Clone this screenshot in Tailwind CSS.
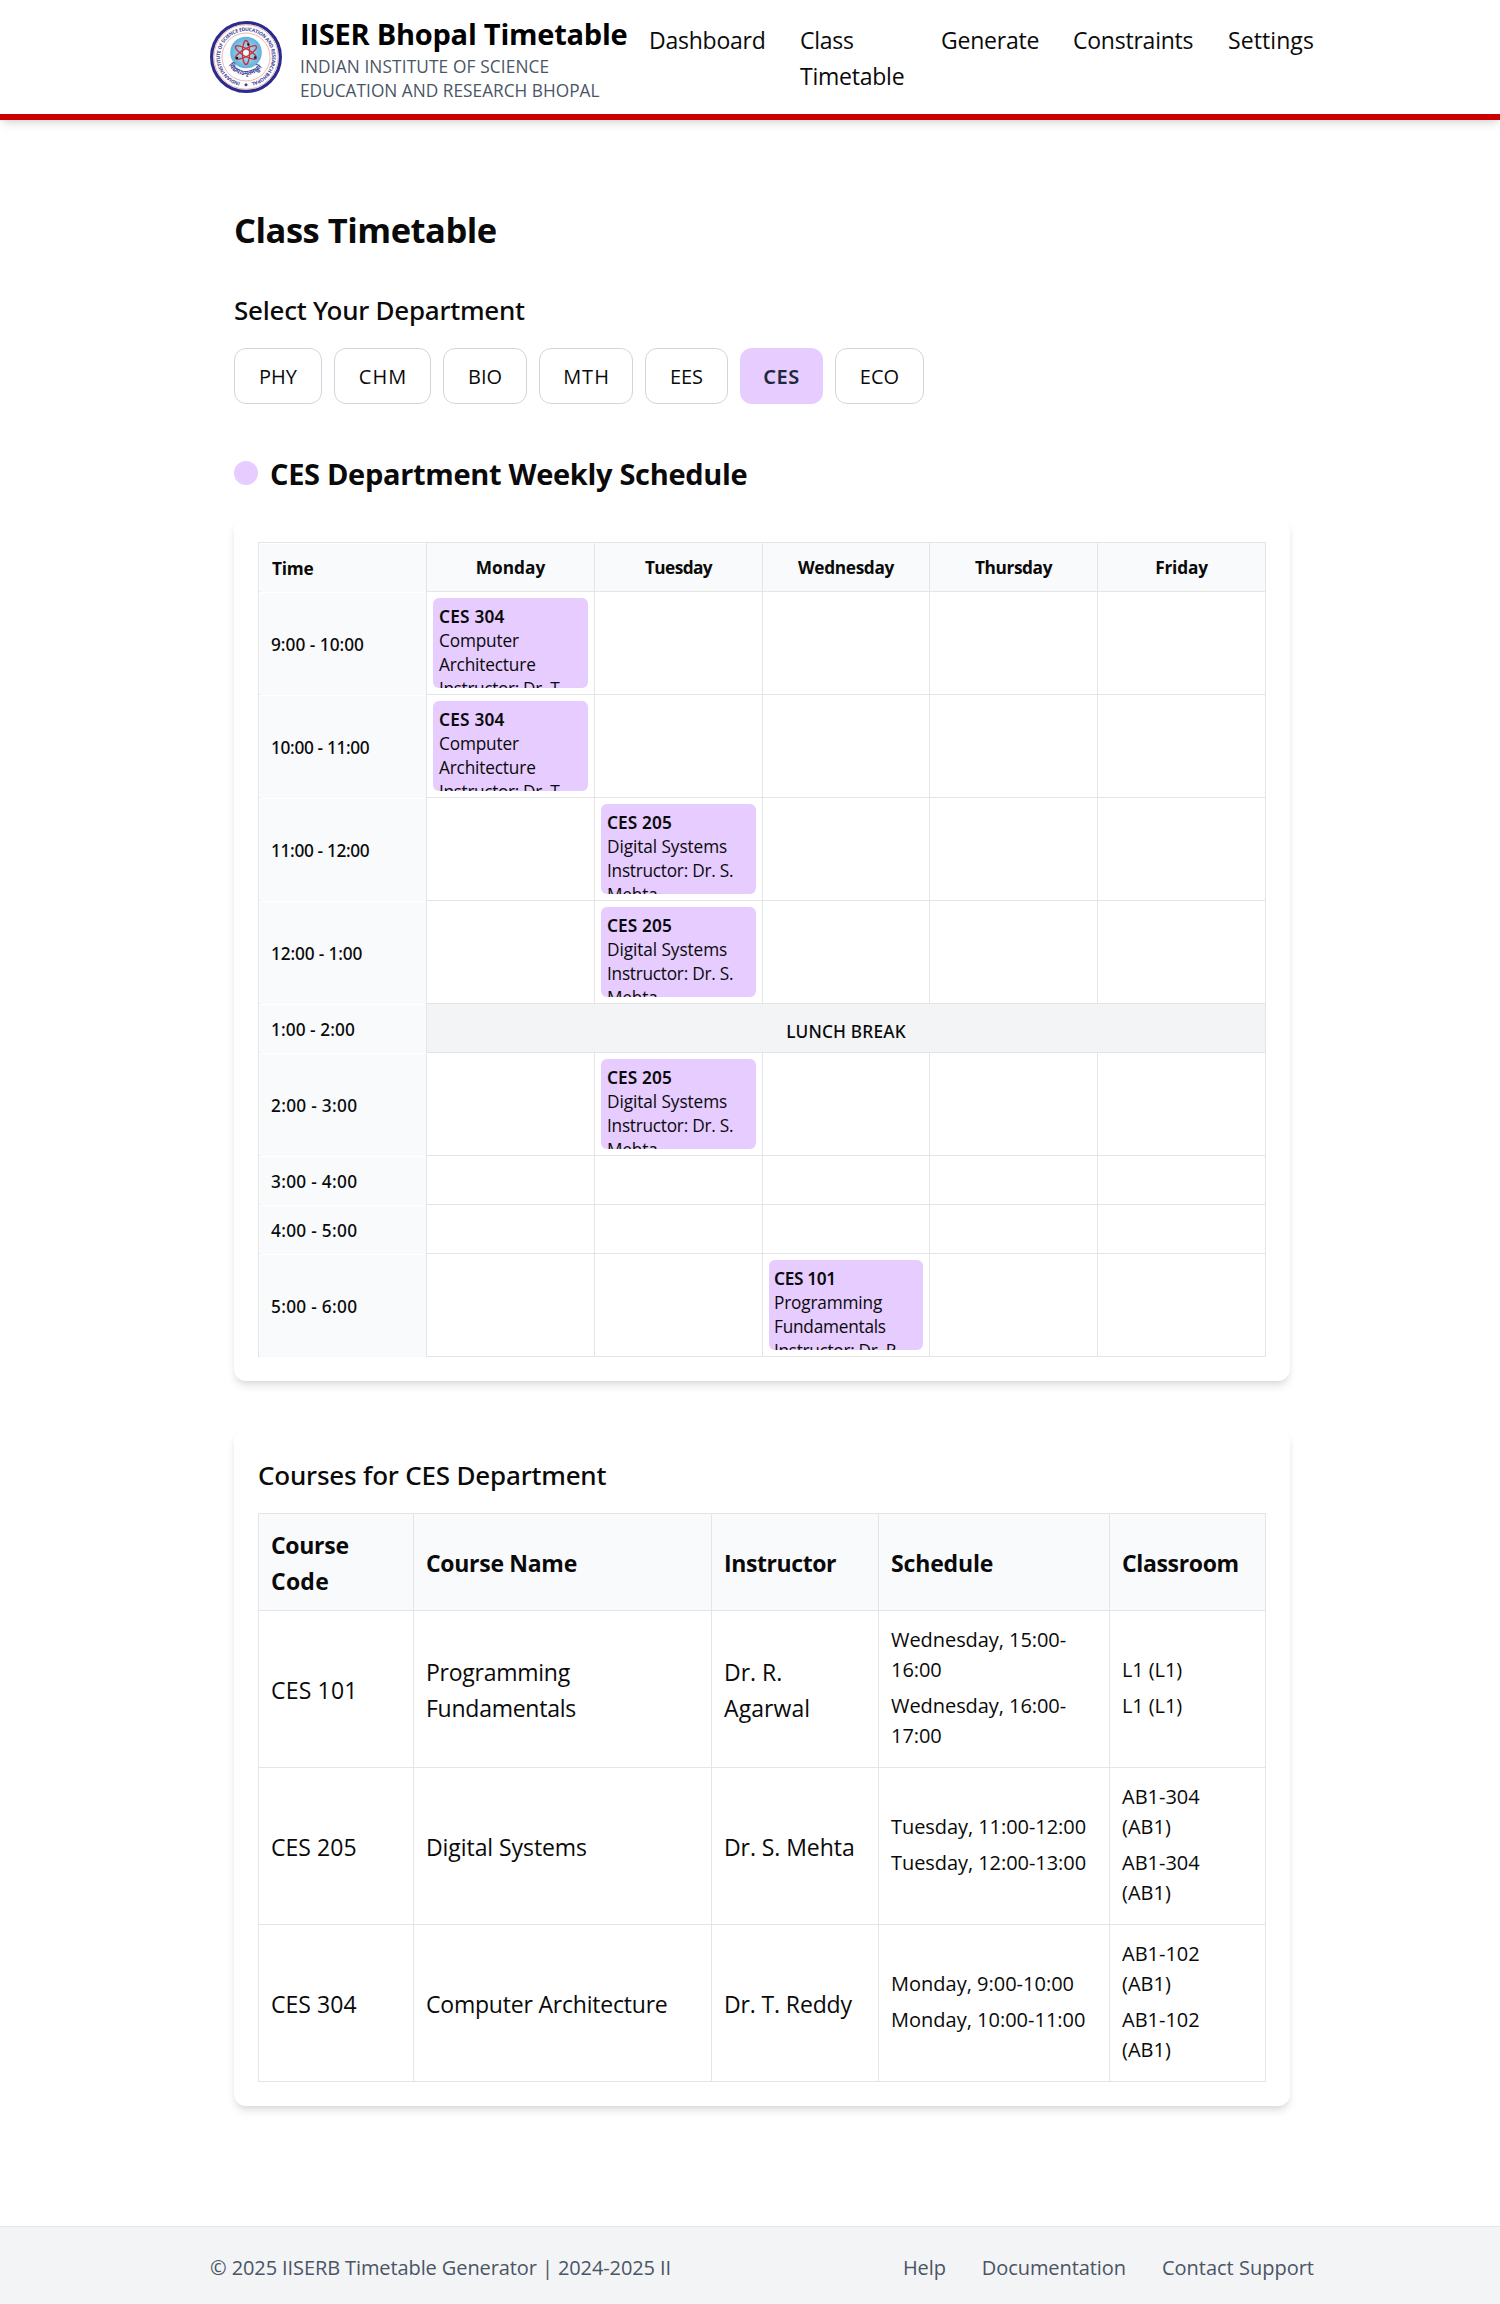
<!DOCTYPE html>
<html lang="en">
<head>
<meta charset="utf-8">
<title>IISER Bhopal Timetable</title>
<script src="https://cdn.jsdelivr.net/npm/@tailwindcss/browser@4"></script>
</head>
<body class="bg-white font-['Open_Sans','Noto_Sans',sans-serif] text-neutral-950">

<header class="h-[120px] border-b-[6px] border-[#cc0000] bg-white shadow-[0_6px_9px_-1.5px_rgba(0,0,0,0.1),0_3px_6px_-3px_rgba(0,0,0,0.1)]">
  <div class="ml-[210px] flex h-[114px] w-[1104px]">
    <svg class="mt-[21px] size-[72px] shrink-0" viewBox="0 0 72 72">
      <defs>
        <path id="ring" d="M36 62 A26 26 0 0 1 36 10 A26 26 0 0 1 36 62"/>
        <path id="motto" d="M17.5 41 A19.5 19.5 0 0 0 54.5 41"/>
        <radialGradient id="sky"><stop offset="0" stop-color="#c4e6f8"/><stop offset="1" stop-color="#5fb1dd"/></radialGradient>
      </defs>
      <circle cx="36" cy="36" r="34.4" fill="#fff" stroke="#2b2d8e" stroke-width="3.2"/>
      <circle cx="36" cy="36" r="32.2" fill="none" stroke="#e9a8a4" stroke-width="0.9"/>
      <circle cx="36" cy="36" r="24" fill="none" stroke="#efb7b3" stroke-width="1"/>
      <text class="font-bold" font-size="5" fill="#3d3f96"><textPath href="#ring" startOffset="6" textLength="151" lengthAdjust="spacing">INDIAN INSTITUTE OF SCIENCE EDUCATION AND RESEARCH BHOPAL</textPath></text>
      <circle cx="36" cy="63.7" r="1.5" fill="#3d3f96"/>
      <circle cx="36" cy="31.5" r="15.8" fill="url(#sky)"/>
      <g fill="none" stroke="#c8323a" stroke-width="1.3">
        <ellipse cx="36" cy="31.5" rx="3.6" ry="12"/>
        <ellipse cx="36" cy="31.5" rx="3.6" ry="12" transform="rotate(60 36 31.5)"/>
        <ellipse cx="36" cy="31.5" rx="3.6" ry="12" transform="rotate(-60 36 31.5)"/>
      </g>
      <circle cx="36" cy="32" r="2.8" fill="#f3f8fc"/>
      <g fill="#1c1c28"><circle cx="38.3" cy="23.5" r="1.2"/><circle cx="27" cy="37" r="1.2"/><circle cx="45" cy="36.5" r="1.2"/></g>
      <text class="font-bold" font-size="7" fill="#3d3f96"><textPath href="#motto" startOffset="3" textLength="40" lengthAdjust="spacingAndGlyphs">विद्ययाऽमृतमश्नुते</textPath></text>
    </svg>
    <div class="ml-[18px] w-[350px] pt-[13px] whitespace-nowrap">
      <p class="text-[29px] leading-[42px] font-bold tracking-[-0.008em] text-black">IISER Bhopal Timetable</p>
      <p class="text-[17.25px] leading-6 tracking-[0.0075em] text-gray-600">INDIAN INSTITUTE OF SCIENCE</p>
      <p class="text-[17.25px] leading-6 tracking-[0.001em] text-gray-600">EDUCATION AND RESEARCH BHOPAL</p>
    </div>
    <nav class="flex pt-[22px] text-[23px] leading-9 tracking-[-0.01em] whitespace-nowrap">
      <a class="w-[151px]">Dashboard</a>
      <a class="w-[141px]">Class<br>Timetable</a>
      <a class="w-[132px]">Generate</a>
      <a class="w-[155px]">Constraints</a>
      <a class="tracking-[0.004em]">Settings</a>
    </nav>
  </div>
</header>

<main class="ml-[234px] w-[1056px] pt-[86px]">
  <h1 class="text-[34.5px] leading-[48px] font-bold tracking-[-0.014em]">Class Timetable</h1>
  <h2 class="mt-[35px] font-['Noto_Sans'] text-[26px] leading-[42px] font-medium tracking-[-0.0095em]">Select Your Department</h2>

  <div class="mt-[17px] flex gap-3 text-center text-[20px]">
    <button class="h-14 w-[88px] rounded-xl border border-gray-300 pt-0.5">PHY</button>
    <button class="h-14 w-[97px] rounded-xl border border-gray-300 pt-0.5 pl-px tracking-[0.05em]">CHM</button>
    <button class="h-14 w-[84px] rounded-xl border border-gray-300 pt-0.5">BIO</button>
    <button class="h-14 w-[94px] rounded-xl border border-gray-300 pt-0.5 pl-px tracking-[0.05em]">MTH</button>
    <button class="h-14 w-[83px] rounded-xl border border-gray-300 pt-0.5">EES</button>
    <button class="h-14 w-[83px] rounded-xl bg-[#e6ccff] pt-0.5 font-['Noto_Sans'] font-semibold tracking-[0.027em] text-gray-800">CES</button>
    <button class="h-14 w-[89px] rounded-xl border border-gray-300 pt-0.5">ECO</button>
  </div>

  <div class="mt-12 flex items-center gap-3">
    <span class="size-6 rounded-full bg-[#e6ccff]"></span>
    <h2 class="h-[42px] pt-px text-[29px] leading-[42px] font-bold tracking-[-0.011em]">CES Department Weekly Schedule</h2>
  </div>

  <!-- Weekly timetable -->
  <section class="mt-6 rounded-xl bg-white p-6 shadow-[0_6px_9px_-1.5px_rgba(0,0,0,0.1),0_3px_6px_-3px_rgba(0,0,0,0.1)]">
    <div class="grid grid-cols-[168px_168px_168px_167px_168px_168px] grid-rows-[49px_103px_103px_103px_103px_49px_103px_49px_49px_103px] border-r border-b border-neutral-200 text-[17.25px] leading-6 whitespace-nowrap [&>*]:border-t [&>*]:border-l [&>*]:border-neutral-200">
      <div><div class="mt-px ml-px flex h-[47px] items-center bg-gray-50 pt-[3px] pl-3 font-bold tracking-[-0.013em]">Time</div></div>
      <div class="flex items-center justify-center bg-gray-50 pt-0.5 font-bold">Monday</div>
      <div class="flex items-center justify-center bg-gray-50 pt-0.5 font-bold tracking-[-0.035em]">Tuesday</div>
      <div class="flex items-center justify-center bg-gray-50 pt-0.5 font-bold tracking-[-0.019em]">Wednesday</div>
      <div class="flex items-center justify-center bg-gray-50 pt-0.5 font-bold tracking-[-0.022em]">Thursday</div>
      <div class="flex items-center justify-center bg-gray-50 pt-0.5 font-bold tracking-[-0.01em]">Friday</div>

      <div><div class="-mt-px ml-px h-px bg-gray-50"></div><div class="mt-px ml-px flex h-[101px] items-center bg-gray-50 pt-0.5 pl-[11px] font-['Noto_Sans'] font-medium">9:00 - 10:00</div></div>
      <div class="p-1.5"><div class="h-[90px] overflow-hidden rounded-md bg-[#e6ccff] px-1.5 pt-[7px] tracking-[-0.01em]"><p class="font-['Noto_Sans'] font-semibold tracking-[0.012em]">CES 304</p><p>Computer</p><p>Architecture</p><p class="tracking-[-0.02em]">Instructor: Dr. T.</p></div></div>
      <div></div><div></div><div></div><div></div>

      <div><div class="-mt-px ml-px h-px bg-gray-50"></div><div class="mt-px ml-px flex h-[101px] items-center bg-gray-50 pt-0.5 pl-[11px] font-['Noto_Sans'] font-medium tracking-[-0.02em]">10:00 - 11:00</div></div>
      <div class="p-1.5"><div class="h-[90px] overflow-hidden rounded-md bg-[#e6ccff] px-1.5 pt-[7px] tracking-[-0.01em]"><p class="font-['Noto_Sans'] font-semibold tracking-[0.012em]">CES 304</p><p>Computer</p><p>Architecture</p><p class="tracking-[-0.02em]">Instructor: Dr. T.</p></div></div>
      <div></div><div></div><div></div><div></div>

      <div><div class="-mt-px ml-px h-px bg-gray-50"></div><div class="mt-px ml-px flex h-[101px] items-center bg-gray-50 pt-0.5 pl-[11px] font-['Noto_Sans'] font-medium tracking-[-0.02em]">11:00 - 12:00</div></div>
      <div></div>
      <div class="p-1.5"><div class="h-[90px] overflow-hidden rounded-md bg-[#e6ccff] px-1.5 pt-[7px] tracking-[-0.01em]"><p class="font-['Noto_Sans'] font-semibold tracking-[0.006em]">CES 205</p><p class="tracking-[-0.005em]">Digital Systems</p><p class="tracking-[-0.015em]">Instructor: Dr. S.</p><p>Mehta</p></div></div>
      <div></div><div></div><div></div>

      <div><div class="-mt-px ml-px h-px bg-gray-50"></div><div class="mt-px ml-px flex h-[101px] items-center bg-gray-50 pt-0.5 pl-[11px] font-['Noto_Sans'] font-medium tracking-[-0.008em]">12:00 - 1:00</div></div>
      <div></div>
      <div class="p-1.5"><div class="h-[90px] overflow-hidden rounded-md bg-[#e6ccff] px-1.5 pt-[7px] tracking-[-0.01em]"><p class="font-['Noto_Sans'] font-semibold tracking-[0.006em]">CES 205</p><p class="tracking-[-0.005em]">Digital Systems</p><p class="tracking-[-0.015em]">Instructor: Dr. S.</p><p>Mehta</p></div></div>
      <div></div><div></div><div></div>

      <div><div class="-mt-px ml-px h-px bg-gray-50"></div><div class="mt-px ml-px flex h-[47px] items-center bg-gray-50 pt-0.5 pl-[11px] font-['Noto_Sans'] font-medium tracking-[0.004em]">1:00 - 2:00</div></div>
      <div class="col-span-5 flex items-center justify-center bg-gray-100 pt-2 font-['Noto_Sans'] font-medium tracking-[0.0105em]">LUNCH BREAK</div>

      <div><div class="-mt-px ml-px h-px bg-gray-50"></div><div class="mt-px ml-px flex h-[101px] items-center bg-gray-50 pt-0.5 pl-[11px] font-['Noto_Sans'] font-medium tracking-[0.017em]">2:00 - 3:00</div></div>
      <div></div>
      <div class="p-1.5"><div class="h-[90px] overflow-hidden rounded-md bg-[#e6ccff] px-1.5 pt-[7px] tracking-[-0.01em]"><p class="font-['Noto_Sans'] font-semibold tracking-[0.006em]">CES 205</p><p class="tracking-[-0.005em]">Digital Systems</p><p class="tracking-[-0.015em]">Instructor: Dr. S.</p><p>Mehta</p></div></div>
      <div></div><div></div><div></div>

      <div><div class="-mt-px ml-px h-px bg-gray-50"></div><div class="mt-px ml-px flex h-[47px] items-center bg-gray-50 pt-0.5 pl-[11px] font-['Noto_Sans'] font-medium tracking-[0.017em]">3:00 - 4:00</div></div>
      <div></div><div></div><div></div><div></div><div></div>

      <div><div class="-mt-px ml-px h-px bg-gray-50"></div><div class="mt-px ml-px flex h-[47px] items-center bg-gray-50 pt-0.5 pl-[11px] font-['Noto_Sans'] font-medium tracking-[0.017em]">4:00 - 5:00</div></div>
      <div></div><div></div><div></div><div></div><div></div>

      <div><div class="-mt-px ml-px h-px bg-gray-50"></div><div class="mt-px ml-px flex h-[102px] items-center bg-gray-50 pt-px pl-[11px] font-['Noto_Sans'] font-medium tracking-[0.017em]">5:00 - 6:00</div></div>
      <div></div><div></div>
      <div class="p-1.5"><div class="h-[90px] overflow-hidden rounded-md bg-[#e6ccff] pt-[7px] pl-[5px] tracking-[-0.01em]"><p class="font-['Noto_Sans'] font-semibold tracking-[-0.02em]">CES 101</p><p>Programming</p><p class="tracking-[-0.014em]">Fundamentals</p><p class="tracking-[-0.018em]">Instructor: Dr. R.</p></div></div>
      <div></div><div></div>
    </div>
  </section>

  <!-- Course list -->
  <section class="mt-12 rounded-xl bg-white px-6 pb-6 shadow-[0_6px_9px_-1.5px_rgba(0,0,0,0.1),0_3px_6px_-3px_rgba(0,0,0,0.1)]">
    <h3 class="pt-[25px] pb-[17px] font-['Noto_Sans'] text-[26px] leading-[42px] font-medium tracking-[-0.0075em]">Courses for CES Department</h3>
    <div class="grid grid-cols-[155px_298px_167px_231px_156px] grid-rows-[97px_157px_157px_157px] border-r border-b border-neutral-200 text-[23px] leading-9 whitespace-nowrap [&>*]:flex [&>*]:flex-col [&>*]:justify-center [&>*]:border-t [&>*]:border-l [&>*]:border-neutral-200 [&>*]:pl-3">
      <div class="bg-gray-50 pt-0.5 font-bold tracking-[-0.013em]"><p>Course</p><p class="tracking-[0.01em]">Code</p></div>
      <div class="bg-gray-50 pt-0.5 font-bold tracking-[-0.013em]">Course Name</div>
      <div class="bg-gray-50 pt-0.5 font-bold tracking-[-0.018em]">Instructor</div>
      <div class="bg-gray-50 pt-0.5 font-bold tracking-[-0.007em]">Schedule</div>
      <div class="bg-gray-50 pt-0.5 font-bold tracking-[-0.015em]">Classroom</div>

      <div class="pt-0.5 tracking-[0.008em]">CES 101</div>
      <div class="pt-0.5 tracking-[-0.011em]"><p>Programming</p><p>Fundamentals</p></div>
      <div class="pt-0.5"><p>Dr. R.</p><p class="tracking-[0.004em]">Agarwal</p></div>
      <div class="gap-1.5 pb-[3px] text-[20px] leading-[30px] tracking-[-0.003em]"><p>Wednesday, 15:00-<br>16:00</p><p>Wednesday, 16:00-<br>17:00</p></div>
      <div class="gap-1.5 pb-[3px] text-[20px] leading-[30px] tracking-[-0.005em]"><p>L1 (L1)</p><p>L1 (L1)</p></div>

      <div class="pt-0.5 tracking-[0.002em]">CES 205</div>
      <div class="pt-0.5 tracking-[-0.003em]">Digital Systems</div>
      <div class="pt-0.5 tracking-[-0.003em]">Dr. S. Mehta</div>
      <div class="gap-1.5 pb-[3px] text-[20px] leading-[30px] tracking-[-0.003em]"><p>Tuesday, 11:00-12:00</p><p>Tuesday, 12:00-13:00</p></div>
      <div class="gap-1.5 pb-[3px] text-[20px] leading-[30px]"><p>AB1-304<br>(AB1)</p><p>AB1-304<br>(AB1)</p></div>

      <div class="pt-0.5 tracking-[0.002em]">CES 304</div>
      <div class="pt-0.5 tracking-[-0.009em]">Computer Architecture</div>
      <div class="pt-0.5 tracking-[-0.006em]">Dr. T. Reddy</div>
      <div class="gap-1.5 pb-[3px] text-[20px] leading-[30px]"><p>Monday, 9:00-10:00</p><p>Monday, 10:00-11:00</p></div>
      <div class="gap-1.5 pb-[3px] text-[20px] leading-[30px]"><p>AB1-102<br>(AB1)</p><p>AB1-102<br>(AB1)</p></div>
    </div>
  </section>
</main>

<footer class="mt-[120px] h-[78px] border-t border-gray-200 bg-gray-100">
  <div class="ml-[210px] flex w-[1104px] justify-between pt-[26px] text-[20px] leading-[30px] whitespace-nowrap text-gray-600">
    <p class="tracking-[-0.005em]">© 2025 IISERB Timetable Generator | 2024-2025 II</p>
    <div class="flex gap-9 tracking-[-0.004em]"><a>Help</a><a>Documentation</a><a class="tracking-normal">Contact Support</a></div>
  </div>
</footer>
</body>
</html>
